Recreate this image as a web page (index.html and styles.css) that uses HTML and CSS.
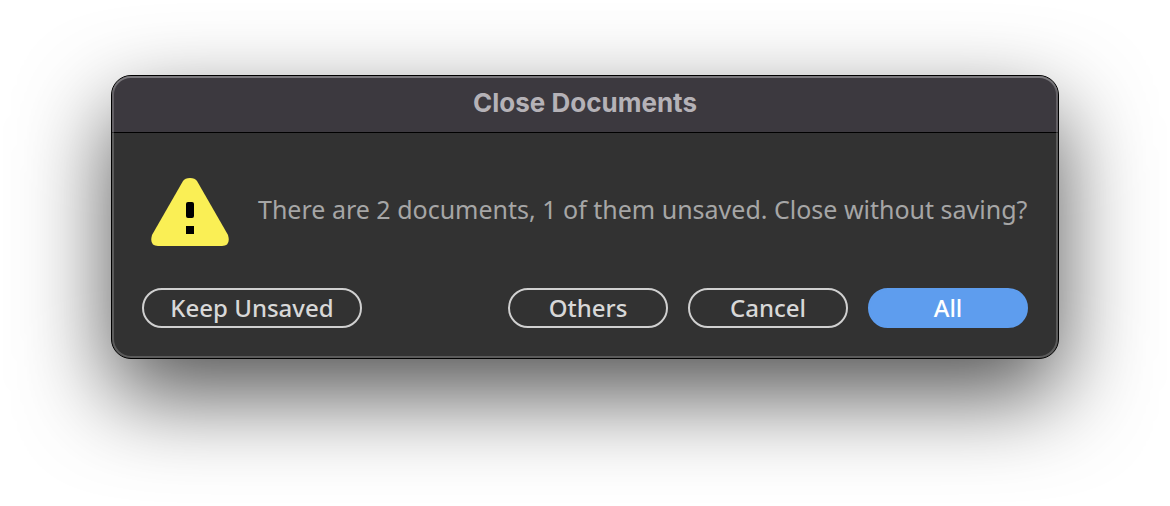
FILE: index.html
```html
<!DOCTYPE html>
<html lang="en">
<head>
<meta charset="utf-8">
<title>Close Documents</title>
<link rel="stylesheet" href="styles.css">
</head>
<body>
<main class="dialog" role="alertdialog" aria-labelledby="title" aria-describedby="message">
  <header class="titlebar"><h1 class="title" id="title">Close Documents</h1></header>
  <div class="content">
    <div class="message">
      <svg class="warning" viewBox="0 0 78 68" aria-hidden="true">
        <path fill="#faef55" d="M32 3Q34 0 39 0T46 3L77 57Q80 68 71 68H7Q-2 68 1 57Z"/>
        <rect x="35" y="24" width="8" height="16" rx="2"/>
        <rect x="35" y="48" width="8" height="8"/>
      </svg>
      <p class="text" id="message">There are 2 documents, 1 of them unsaved. Close without saving?</p>
    </div>
    <div class="actions">
      <button class="button button-wide" type="button">Keep Unsaved</button>
      <button class="button" type="button">Others</button>
      <button class="button" type="button">Cancel</button>
      <button class="button button-primary" type="button">All</button>
    </div>
  </div>
</main>
</body>
</html>
```
FILE: styles.css
```css
* { box-sizing: border-box; }
body {
  min-height: 100vh;
  margin: 0;
  padding: 75px 111px;
  background: #fff;
  font-family: "Noto Sans", sans-serif;
}
.dialog {
  position: relative;
  border: 1px solid #000;
  border-radius: 20px;
  background: #323232;
  box-shadow: 0 36px 90px rgba(0, 0, 0, 0.68);
}
.dialog::after {
  content: "";
  position: absolute;
  inset: 0;
  border-radius: 19px;
  box-shadow: inset 0 0 0 2px rgba(255, 255, 255, 0.2), inset 0 2px 0 rgba(255, 255, 255, 0.16);
  pointer-events: none;
}
.titlebar {
  display: flex;
  align-items: center;
  justify-content: center;
  height: 57px;
  padding-bottom: 2px;
  border-bottom: 1px solid #000;
  border-radius: 19px 19px 0 0;
  background: #3c393f;
}
.title {
  margin: 0;
  color: #b5b2b7;
  font: 700 26px/32px Inter, sans-serif;
}
.content {
  display: flex;
  flex-direction: column;
  gap: 42px;
  padding: 45px 30px 30px;
}
.message {
  display: flex;
  align-items: center;
  gap: 29px;
  padding-left: 9px;
}
.warning {
  flex: none;
  width: 78px;
  height: 68px;
}
.text {
  margin: 0;
  padding-bottom: 6px;
  color: #a6a6a6;
  font-size: 25px;
  line-height: 32px;
  white-space: nowrap;
}
.actions {
  display: flex;
  gap: 20px;
}
.button {
  width: 160px;
  height: 40px;
  padding: 0;
  border: 2px solid #d0d0d0;
  border-radius: 20px;
  background: transparent;
  color: #d8d8d8;
  font: 500 24px/32px "Noto Sans", sans-serif;
}
.button-wide {
  width: 220px;
  margin-right: auto;
}
.button-primary {
  border-color: #5e9dee;
  background: #5e9dee;
  color: #fff;
}
```
